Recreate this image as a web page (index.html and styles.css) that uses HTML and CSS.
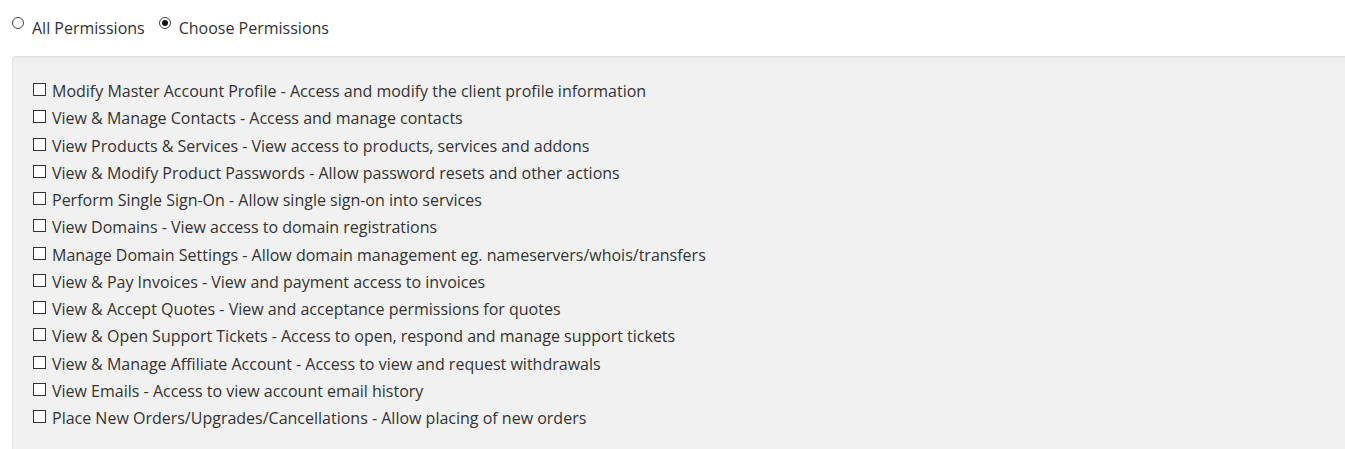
FILE: index.html
```html
<!DOCTYPE html>
<html lang="en">
<head>
  <meta charset="UTF-8" />
  <title>Permissions</title>
  <link rel="stylesheet" href="styles.css">
</head>
<body>
  <div class="scope">
    <label class="opt"><input type="radio" name="scope" value="all"> All Permissions</label>
    <label class="opt"><input type="radio" name="scope" value="choose" checked> Choose Permissions</label>
  </div>

  <div class="well">
    <label class="perm"><input type="checkbox"> Modify Master Account Profile - Access and modify the client profile information</label>
    <label class="perm"><input type="checkbox"> View &amp; Manage Contacts - Access and manage contacts</label>
    <label class="perm"><input type="checkbox"> View Products &amp; Services - View access to products, services and addons</label>
    <label class="perm"><input type="checkbox"> View &amp; Modify Product Passwords - Allow password resets and other actions</label>
    <label class="perm"><input type="checkbox"> Perform Single Sign-On - Allow single sign-on into services</label>
    <label class="perm"><input type="checkbox"> View Domains - View access to domain registrations</label>
    <label class="perm"><input type="checkbox"> Manage Domain Settings - Allow domain management eg. nameservers/whois/transfers</label>
    <label class="perm"><input type="checkbox"> View &amp; Pay Invoices - View and payment access to invoices</label>
    <label class="perm"><input type="checkbox"> View &amp; Accept Quotes - View and acceptance permissions for quotes</label>
    <label class="perm"><input type="checkbox"> View &amp; Open Support Tickets - Access to open, respond and manage support tickets</label>
    <label class="perm"><input type="checkbox"> View &amp; Manage Affiliate Account - Access to view and request withdrawals</label>
    <label class="perm"><input type="checkbox"> View Emails - Access to view account email history</label>
    <label class="perm"><input type="checkbox"> Place New Orders/Upgrades/Cancellations - Allow placing of new orders</label>
  </div>
</body>
</html>
```

FILE: styles.css
```css
* {
  box-sizing: border-box;
}

body {
  margin: 0;
  padding: 15px 0 0 12px;
  font-family: 'Open Sans', 'Noto Sans', sans-serif;
  font-size: 16px;
  color: #333;
  background: #fff;
}

.scope {
  display: flex;
  gap: 14px;
  height: 41px;
}

.opt {
  display: flex;
  align-items: flex-start;
  line-height: 27px;
}

input[type="radio"] {
  appearance: none;
  width: 12px;
  height: 12px;
  margin: 2px 8px 0 0;
  border: 1px solid #444;
  border-radius: 50%;
  background: #fff;
  position: relative;
}

input[type="radio"]:checked::after {
  content: "";
  position: absolute;
  left: 2px;
  top: 2px;
  width: 6px;
  height: 6px;
  border-radius: 50%;
  background: #111;
}

.well {
  background: #f1f1f1;
  border: 1px solid #e0e0e0;
  border-right: none;
  border-bottom: none;
  border-radius: 4px 0 0 0;
  box-shadow: inset 0 1px 1px rgba(0, 0, 0, 0.05);
  padding: 21px 0 30px 19px;
  min-height: 400px;
}

.perm {
  display: flex;
  align-items: flex-start;
  line-height: 27.25px;
}

input[type="checkbox"] {
  appearance: none;
  flex: none;
  width: 13px;
  height: 13px;
  margin: 5px 6px 0 1px;
  border: 1px solid #333;
  background: #fff;
}
```
